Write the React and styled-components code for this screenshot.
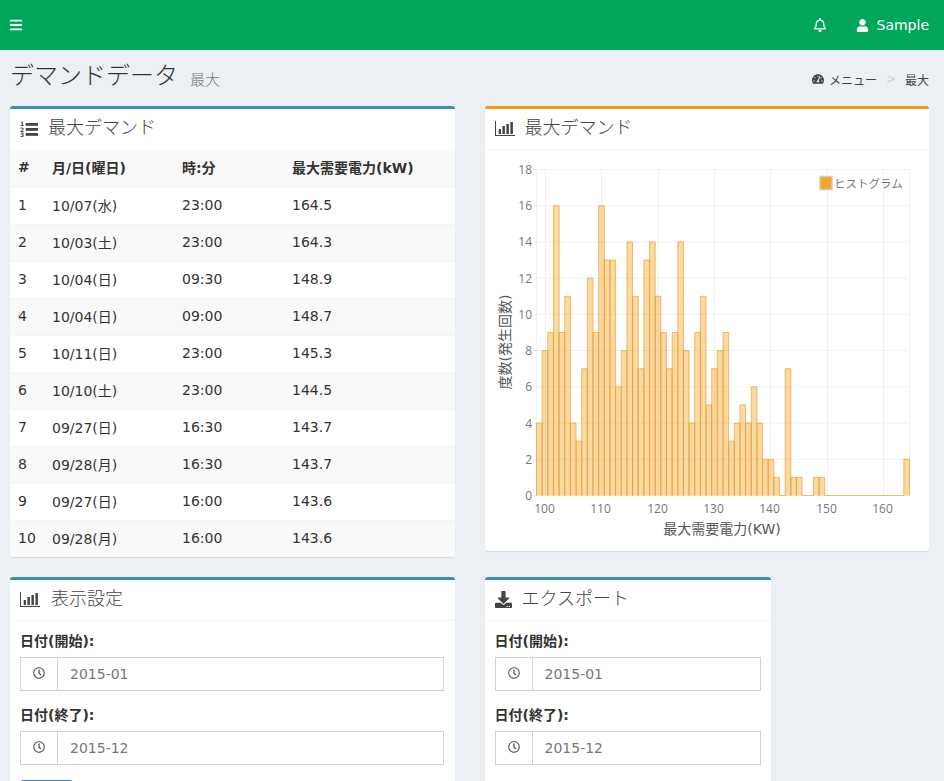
import React from "react";
import styled, { createGlobalStyle } from "styled-components";
import {
  FaBars,
  FaRegBell,
  FaUser,
  FaTachometerAlt,
  FaDownload,
  FaRegClock,
} from "react-icons/fa";

const rows = [
  ["1", "10/07(水)", "23:00", "164.5"],
  ["2", "10/03(土)", "23:00", "164.3"],
  ["3", "10/04(日)", "09:30", "148.9"],
  ["4", "10/04(日)", "09:00", "148.7"],
  ["5", "10/11(日)", "23:00", "145.3"],
  ["6", "10/10(土)", "23:00", "144.5"],
  ["7", "09/27(日)", "16:30", "143.7"],
  ["8", "09/28(月)", "16:30", "143.7"],
  ["9", "09/27(日)", "16:00", "143.6"],
  ["10", "09/28(月)", "16:00", "143.6"],
];

const histogram = [
  4, 8, 9, 16, 9, 11, 4, 3, 7, 12, 9, 16, 13, 13, 6, 8, 14, 11, 7, 13, 14, 11,
  9, 7, 9, 14, 8, 4, 9, 11, 5, 7, 8, 9, 3, 4, 5, 4, 6, 4, 2, 2, 1, 0, 7, 1, 1,
  0, 0, 1, 1, 0, 0, 0, 0, 0, 0, 0, 0, 0, 0, 0, 0, 0, 0, 2,
];

// chart geometry, in svg coordinates
const plotLeft = 41.5;
const plotRight = 414.5;
const plotTop = 9.5;
const plotBottom = 335.5;
const unitY = (plotBottom - plotTop) / 18;
const barWidth = (plotRight - plotLeft) / histogram.length;
const xTicks = [
  [100, 50.5],
  [110, 106.5],
  [120, 163.5],
  [130, 219.5],
  [140, 275.5],
  [150, 332.5],
  [160, 388.5],
];
const yTicks = [0, 2, 4, 6, 8, 10, 12, 14, 16, 18];

const GlobalStyle = createGlobalStyle`
  html, body {
    margin: 0;
    padding: 0;
    height: 781px;
    overflow: hidden;
    background: #ecf0f5;
  }
  * {
    box-sizing: border-box;
  }
  body {
    font-family: "DejaVu Sans", "Noto Sans CJK JP", sans-serif;
    font-size: 14px;
    color: #333;
  }
`;

const TopBar = styled.header`
  height: 50px;
  background: #00a65a;
  color: #fff;
  display: flex;
  align-items: center;
  padding: 0 15px 0 9px;
`;

const TopSpacer = styled.div`
  flex: 1;
`;

const TopItem = styled.div`
  display: flex;
  align-items: center;
  gap: 8px;
  margin-left: ${(p) => p.$gap || 0}px;
  font-size: 14px;
  line-height: 1;
`;

const TitleRow = styled.div`
  height: 56px;
  display: flex;
  align-items: center;
  justify-content: space-between;
  padding: 0 15px 0 10px;
`;

const Title = styled.h1`
  margin: 0 0 3px;
  font-size: 24px;
  line-height: 1.1;
  font-weight: 300;
  display: flex;
  align-items: flex-end;
  color: #333;
`;

const SubTitle = styled.small`
  font-size: 15px;
  color: #777;
  margin: 0 0 1px 12px;
`;

const Crumbs = styled.div`
  display: flex;
  align-items: center;
  font-size: 12px;
  color: #444;
  margin-top: 2px;
`;

const CrumbSep = styled.span`
  color: #ccc;
  margin: 0 9px;
`;

const CrumbIcon = styled.span`
  display: flex;
  margin-right: 5px;
`;

const Content = styled.main`
  display: grid;
  grid-template-columns: 444.5px 444.5px;
  column-gap: 30px;
  row-gap: 20px;
  align-items: start;
  padding: 0 15px 0 10px;
`;

const Box = styled.section`
  background: #fff;
  border-top: 3px solid ${(p) => p.$accent};
  border-radius: 3px;
  box-shadow: 0 1px 1px rgba(0, 0, 0, 0.1);
  width: ${(p) => p.$width || "100%"};
`;

const BoxHeader = styled.div`
  height: 41px;
  display: flex;
  align-items: center;
  gap: ${(p) => p.$gap || 10}px;
  padding: 0 10px 1px;
  border-bottom: ${(p) => (p.$plain ? "none" : "1px solid #f4f4f4")};
  color: #444;
`;

const BoxTitle = styled.h3`
  margin: 0 0 2px;
  font-size: 18px;
  line-height: 1;
  font-weight: 300;
`;

const MaxTable = styled.table`
  width: 100%;
  border-collapse: collapse;
  table-layout: fixed;
`;

const HeadCell = styled.th`
  height: 37px;
  padding: 0 8px 2px;
  text-align: left;
  font-weight: 700;
  font-size: 14px;
  color: #333;
  width: ${(p) => p.$width || "auto"};
  background: #f9f9f9;
`;

const Row = styled.tr`
  background: ${(p) => (p.$odd ? "#fff" : "#f9f9f9")};
`;

const Cell = styled.td`
  height: 37px;
  padding: 0 8px 2px;
  border-top: 1px solid #f4f4f4;
`;

const ChartBody = styled.div`
  padding: 10px;
`;

const ChartSvg = styled.svg`
  display: block;
  font-family: "Open Sans", "Noto Sans CJK JP", sans-serif;
`;

const AxisTitle = styled.text`
  font-family: "DejaVu Sans", "Noto Sans CJK JP", sans-serif;
  font-size: 14px;
  fill: #555;
  text-anchor: middle;
`;

const FormBody = styled.div`
  padding: 10px ${(p) => p.$right || 10}px 10px 10px;
`;

const FormGroup = styled.div`
  margin-bottom: 14px;
`;

const FieldLabel = styled.label`
  display: block;
  height: 20px;
  line-height: 20px;
  margin-bottom: 6px;
  font-weight: 700;
  font-size: 14px;
`;

const InputGroup = styled.div`
  display: flex;
  height: 34px;
  border: 1px solid #d2d2d2;
`;

const InputAddon = styled.div`
  width: 37px;
  flex: none;
  display: flex;
  align-items: center;
  justify-content: center;
  border-right: 1px solid #d2d2d2;
  padding-bottom: 2px;
  color: #555;
`;

const DateInput = styled.input`
  flex: 1;
  min-width: 0;
  border: 0;
  outline: 0;
  padding: 0 12px;
  font: inherit;
  color: #777;
  background: #fff;
`;

const SubmitButton = styled.button`
  display: block;
  width: 53px;
  height: 34px;
  margin-top: 15px;
  border: 1px solid #367fa9;
  border-radius: 3px;
  background: #3c8dbc;
  color: #fff;
  font: inherit;
`;

const BarChartIcon = () => (
  <svg width="20" height="15" viewBox="0 0 20 15" fill="currentColor">
    <rect x="0" y="0" width="1" height="15" />
    <rect x="0" y="14" width="20" height="1" />
    <rect x="3.7" y="8" width="2.3" height="5" />
    <rect x="7.4" y="5" width="2.5" height="8" />
    <rect x="11.4" y="3" width="2.5" height="10" />
    <rect x="15.4" y="1" width="2.5" height="12" />
  </svg>
);

const ListIcon = () => (
  <svg width="18" height="19" viewBox="0 0 18 19" fill="currentColor">
    <rect x="5.7" y="3" width="12.6" height="2.8" />
    <rect x="5.7" y="8" width="12.6" height="2.8" />
    <rect x="5.7" y="13" width="12.6" height="2.8" />
    <text x="0" y="6" fontSize="6" fontWeight="700">1</text>
    <text x="0" y="11.5" fontSize="6" fontWeight="700">2</text>
    <text x="0" y="17" fontSize="6" fontWeight="700">3</text>
  </svg>
);

const DateField = ({ label, value }) => (
  <FormGroup>
    <FieldLabel>{label}</FieldLabel>
    <InputGroup>
      <InputAddon>
        <FaRegClock size={12} />
      </InputAddon>
      <DateInput defaultValue={value} />
    </InputGroup>
  </FormGroup>
);

const barPath = (value, i) => {
  const x0 = plotLeft + i * barWidth;
  const x1 = x0 + barWidth;
  const top = plotBottom - value * unitY;
  return `M${x0} ${plotBottom}V${top}H${x1}V${plotBottom}`;
};

const Histogram = () => (
  <ChartSvg width="424" height="381" viewBox="0 0 424 381">
    {yTicks.map((v) => (
      <g key={v}>
        <line
          x1={plotLeft - 4}
          x2={plotRight}
          y1={plotBottom - v * unitY}
          y2={plotBottom - v * unitY}
          stroke="#f1f1f1"
        />
        <text
          x="37"
          y={plotBottom - v * unitY + 4.5}
          textAnchor="end"
          fontSize="12"
          fill="#777"
        >
          {v}
        </text>
      </g>
    ))}
    <line x1={plotLeft} x2={plotLeft} y1={plotTop} y2={plotBottom} stroke="#f1f1f1" />
    <line x1={plotRight} x2={plotRight} y1={plotTop} y2={plotBottom} stroke="#f1f1f1" />
    {xTicks.map(([v, x]) => (
      <g key={v}>
        <line x1={x} x2={x} y1={plotTop} y2={plotBottom} stroke="#f1f1f1" />
        <text x={x - 1} y={353} textAnchor="middle" fontSize="12" fill="#777">
          {v}
        </text>
      </g>
    ))}
    {histogram.map((v, i) => (
      <path
        key={i}
        d={barPath(v, i)}
        fill="rgba(243,156,18,0.38)"
        stroke="rgba(236,150,20,0.6)"
      />
    ))}
    <rect x="325" y="16.5" width="12" height="13" fill="#f5a623" stroke="#ccc" strokeWidth="1.5" />
    <text x="339" y="27.5" fontSize="11.5" fill="#777">
      ヒストグラム
    </text>
    <AxisTitle x="227" y="374">
      最大需要電力(KW)
    </AxisTitle>
    <AxisTitle transform="translate(15 182) rotate(-90)">度数(発生回数)</AxisTitle>
  </ChartSvg>
);

export default function App() {
  return (
    <>
      <GlobalStyle />
      <TopBar>
        <FaBars size={14} />
        <TopSpacer />
        <TopItem>
          <FaRegBell size={14} />
        </TopItem>
        <TopItem $gap={29}>
          <FaUser size={13} />
          Sample
        </TopItem>
      </TopBar>
      <TitleRow>
        <Title>
          デマンドデータ
          <SubTitle>最大</SubTitle>
        </Title>
        <Crumbs>
          <CrumbIcon>
            <FaTachometerAlt size={12} />
          </CrumbIcon>
          メニュー
          <CrumbSep>&gt;</CrumbSep>
          最大
        </Crumbs>
      </TitleRow>
      <Content>
        <Box $accent="#3c8dbc">
          <BoxHeader $plain>
            <ListIcon />
            <BoxTitle>最大デマンド</BoxTitle>
          </BoxHeader>
          <MaxTable>
            <thead>
              <tr>
                <HeadCell $width="34px">#</HeadCell>
                <HeadCell $width="130px">月/日(曜日)</HeadCell>
                <HeadCell $width="110px">時:分</HeadCell>
                <HeadCell>最大需要電力(kW)</HeadCell>
              </tr>
            </thead>
            <tbody>
              {rows.map((r, i) => (
                <Row key={r[0]} $odd={i % 2 === 0}>
                  {r.map((c, j) => (
                    <Cell key={j}>{c}</Cell>
                  ))}
                </Row>
              ))}
            </tbody>
          </MaxTable>
        </Box>
        <Box $accent="#f39c12">
          <BoxHeader>
            <BarChartIcon />
            <BoxTitle>最大デマンド</BoxTitle>
          </BoxHeader>
          <ChartBody>
            <Histogram />
          </ChartBody>
        </Box>
        <Box $accent="#3c8dbc">
          <BoxHeader $gap={11}>
            <BarChartIcon />
            <BoxTitle>表示設定</BoxTitle>
          </BoxHeader>
          <FormBody $right={11}>
            <DateField label="日付(開始):" value="2015-01" />
            <DateField label="日付(終了):" value="2015-12" />
            <SubmitButton>表示</SubmitButton>
          </FormBody>
        </Box>
        <Box $accent="#3c8dbc" $width="286px">
          <BoxHeader>
            <FaDownload size={17} />
            <BoxTitle>エクスポート</BoxTitle>
          </BoxHeader>
          <FormBody>
            <DateField label="日付(開始):" value="2015-01" />
            <DateField label="日付(終了):" value="2015-12" />
          </FormBody>
        </Box>
      </Content>
    </>
  );
}
